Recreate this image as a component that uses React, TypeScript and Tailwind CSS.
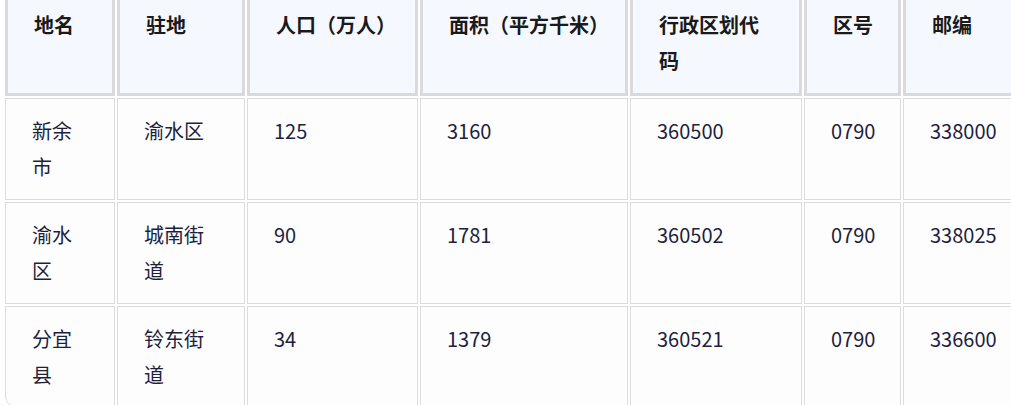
import React from "react";

const headers: { label: string; w: string; nowrap?: boolean }[] = [
  { label: "地名", w: "w-[110px]" },
  { label: "驻地", w: "w-[128px]" },
  { label: "人口（万人）", w: "w-[171px]" },
  { label: "面积（平方千米）", w: "w-[208px]", nowrap: true },
  { label: "行政区划代码", w: "w-[172px]" },
  { label: "区号", w: "w-[97px]", nowrap: true },
  { label: "邮编", w: "w-[125px]" },
];

const rows = [
  ["新余市", "渝水区", "125", "3160", "360500", "0790", "338000"],
  ["渝水区", "城南街道", "90", "1781", "360502", "0790", "338025"],
  ["分宜县", "铃东街道", "34", "1379", "360521", "0790", "336600"],
];

export default function App() {
  return (
    <div
      className="w-[1011px] h-[405px] overflow-hidden bg-white"
      style={{ fontFamily: '"Noto Sans CJK SC", "Noto Sans", sans-serif' }}
    >
      <table className="table-fixed border-separate border-spacing-[2px] w-[1027px] ml-[3px] -mt-[12px] text-[20px] leading-[36px]">
        <thead>
          <tr>
            {headers.map((h) => (
              <th
                key={h.label}
                className={`${h.w} ${h.nowrap ? "whitespace-nowrap" : ""} align-top text-left font-semibold text-[#1a1a1a] bg-[#f5f8ff] border-[3px] border-[#dadada] px-[26px] py-[14px]`}
              >
                {h.label}
              </th>
            ))}
          </tr>
        </thead>
        <tbody>
          {rows.map((r, ri) => (
            <tr key={ri}>
              {r.map((c, ci) => (
                <td
                  key={ci}
                  className={`align-top text-left text-[#1e1f3d] bg-[#fdfdfd] border border-[#dcdcdc] px-[26px] py-[14px] ${
                    ri === rows.length - 1 && ci === 0 ? "rounded-bl-xl" : ""
                  }`}
                >
                  {c}
                </td>
              ))}
            </tr>
          ))}
        </tbody>
      </table>
    </div>
  );
}
